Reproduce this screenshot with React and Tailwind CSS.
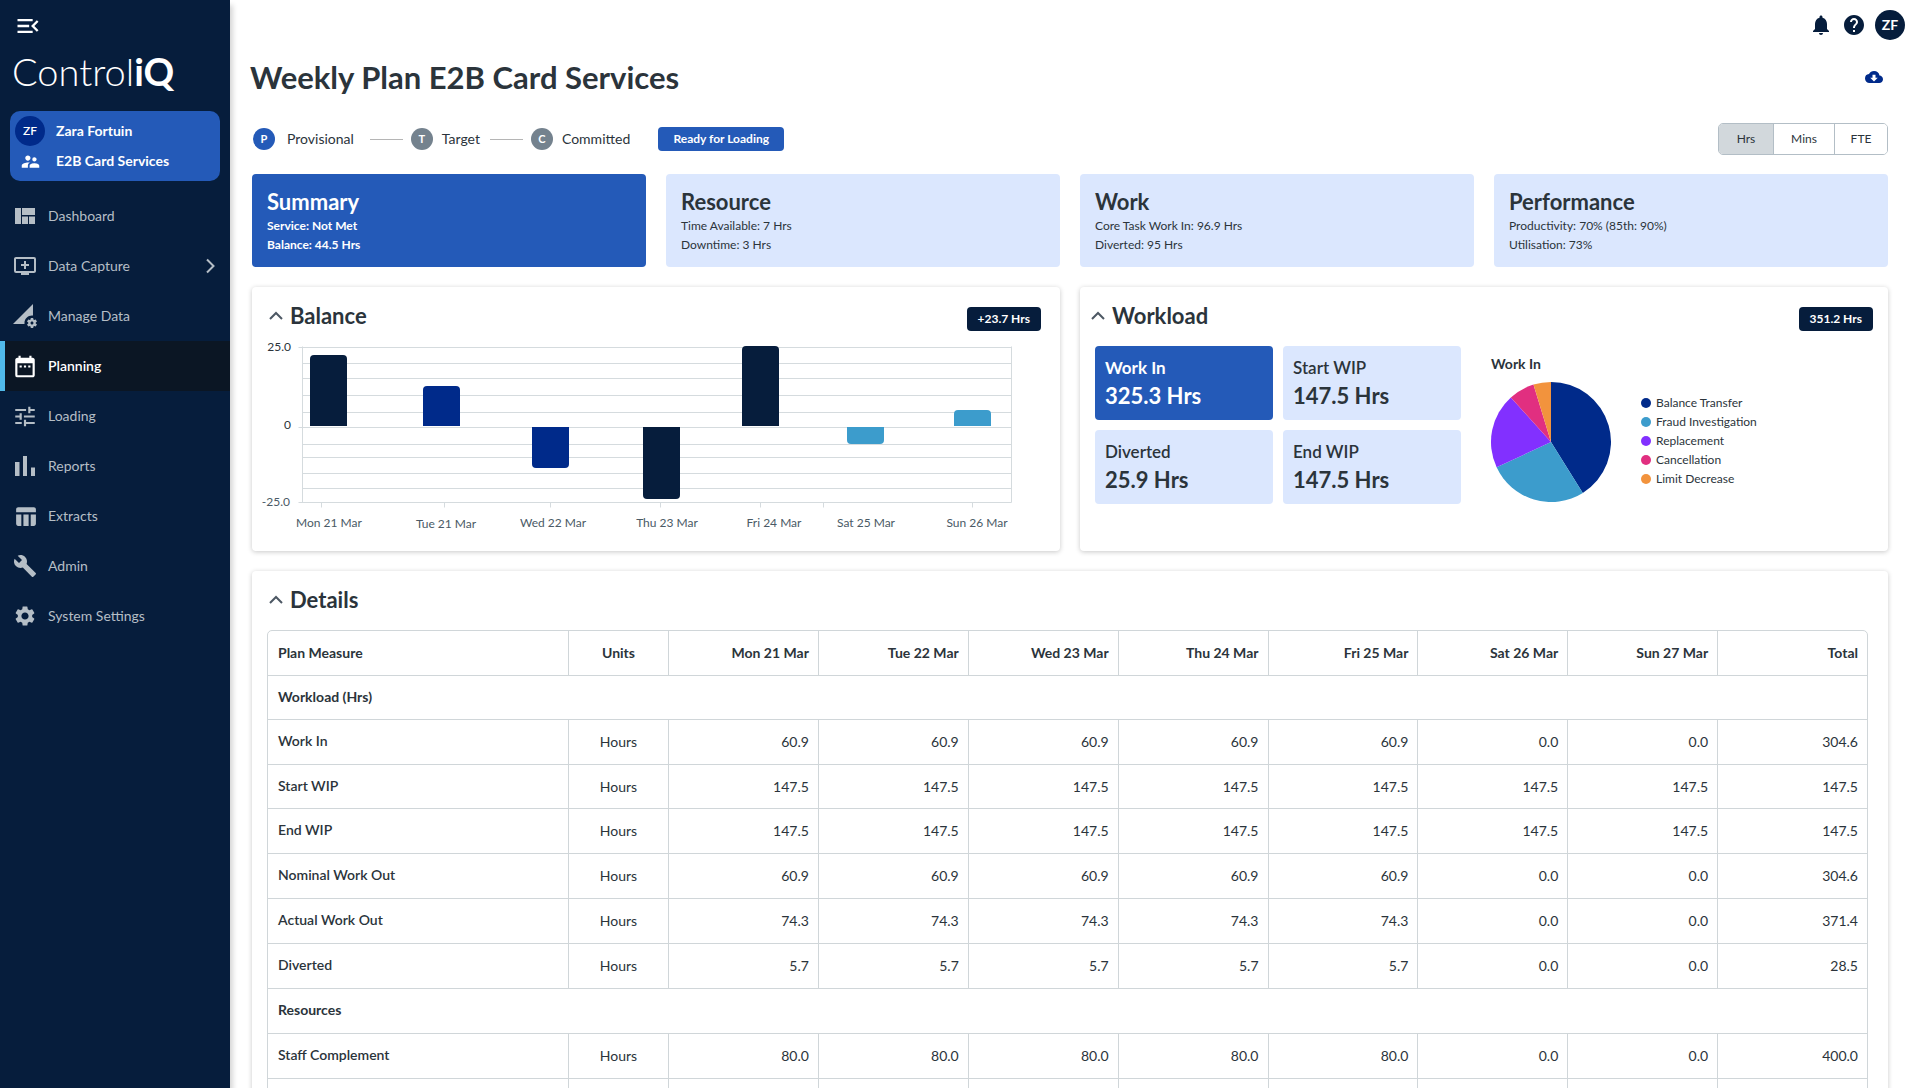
import React, { useState } from "react";
import {
  MdMenuOpen,
  MdAddToQueue,
  MdPermDataSetting,
  MdDateRange,
  MdTune,
  MdTableChart,
  MdBuild,
  MdSettings,
  MdSupervisorAccount,
  MdNotifications,
  MdHelp,
  MdCloudDownload,
} from "react-icons/md";

function QuiltIcon() {
  return (
    <svg width="20" height="16" viewBox="0 0 20 16" fill="currentColor" aria-hidden="true">
      <path d="M0 0h6v16H0zM7 0h13v7H7zM7 8.500h6V16H7zM14 8.500h6V16h-6z" />
    </svg>
  );
}

function BarsIcon() {
  return (
    <svg width="20" height="20" viewBox="0 0 20 20" fill="currentColor" aria-hidden="true">
      <path d="M0 6h4.500v14H0zM8 0h4v20H8zM16 11.500h4V20h-4z" />
    </svg>
  );
}

const NAV = [
  { label: "Dashboard", icon: <QuiltIcon /> },
  { label: "Data Capture", icon: <MdAddToQueue size={24} />, more: true },
  { label: "Manage Data", icon: <MdPermDataSetting size={24} /> },
  { label: "Planning", icon: <MdDateRange size={27} />, active: true },
  { label: "Loading", icon: <MdTune size={27} /> },
  { label: "Reports", icon: <BarsIcon /> },
  { label: "Extracts", icon: <MdTableChart size={25} /> },
  { label: "Admin", icon: <MdBuild size={24} /> },
  { label: "System Settings", icon: <MdSettings size={24} /> },
];

function Sidebar() {
  return (
    <aside className="z-10 flex w-[230px] shrink-0 flex-col bg-[#061d3c] shadow-[3px_5px_5px_rgba(0,0,0,0.16)]">
      <button type="button" aria-label="Collapse menu" className="mt-3 ml-3.5 h-7 w-7 text-white">
        <MdMenuOpen size={28} />
      </button>
      <div className="mt-[7px] ml-3 flex h-12 items-center text-[38px] leading-[48px] text-white">
        <span className="font-light">Control</span>
        <span className="font-bold">iQ</span>
      </div>
      <div className="mx-[10px] mt-4 flex flex-col rounded-[10px] bg-[#245ab8] px-[5px] pt-[5px] pb-[5px] text-sm font-bold text-white">
        <div className="flex h-[30px] items-center gap-[11px]">
          <span className="flex h-[30px] w-[30px] items-center justify-center rounded-full bg-[#002a8a] text-xs font-semibold">
            ZF
          </span>
          <span>Zara Fortuin</span>
        </div>
        <div className="flex h-[30px] items-center gap-[11px]">
          <span className="flex w-[30px] justify-center">
            <MdSupervisorAccount size={21} />
          </span>
          <span>E2B Card Services</span>
        </div>
      </div>
      <nav className="mt-[10px] flex flex-col">
        {NAV.map((n) => (
          <a
            key={n.label}
            href="#"
            className={
              n.active
                ? "flex h-[50px] items-center border-l-[5px] border-[#50b9e9] bg-[#0b1624] pr-[15px] pl-[7px] text-sm font-semibold text-white"
                : "flex h-[50px] items-center pr-[15px] pl-3 text-sm text-[#b5bec6]"
            }
          >
            <span className="mr-[10px] flex w-[26px] justify-center">{n.icon}</span>
            <span className="flex-1">{n.label}</span>
            {n.more && (
              <svg width="9" height="16" viewBox="0 0 9 16" fill="none" stroke="currentColor" strokeWidth="2" aria-hidden="true">
                <path d="M1 1.500L7.500 8L1 14.500" />
              </svg>
            )}
          </a>
        ))}
      </nav>
    </aside>
  );
}

function Step({ letter, label, active }) {
  return (
    <div className={active ? "flex items-center gap-3" : "flex items-center gap-[9px]"}>
      <span
        className={
          active
            ? "flex h-[22px] w-[22px] items-center justify-center rounded-full bg-[#245ab8] text-[11px] font-bold text-white"
            : "flex h-[22px] w-[22px] items-center justify-center rounded-full bg-[#74828e] text-[11px] font-bold text-white"
        }
      >
        {letter}
      </span>
      <span className="text-sm">{label}</span>
    </div>
  );
}

function Toggle() {
  const [unit, setUnit] = useState("Hrs");
  const units = [
    ["Hrs", "w-[54px]"],
    ["Mins", "w-[61px] border-l border-[#b3bec6]"],
    ["FTE", "w-[53px] border-l border-[#b3bec6]"],
  ];
  return (
    <div className="flex h-8 overflow-hidden rounded-[5px] border border-[#b3bec6] text-xs">
      {units.map(([u, w]) => (
        <button
          key={u}
          type="button"
          aria-pressed={u === unit}
          onClick={() => setUnit(u)}
          className={(u === unit ? "bg-[#d2d8dc] " : "bg-white ") + w}
        >
          {u}
        </button>
      ))}
    </div>
  );
}

const CARDS = [
  { title: "Summary", lines: ["Service: Not Met", "Balance: 44.5 Hrs"], active: true },
  { title: "Resource", lines: ["Time Available: 7 Hrs", "Downtime: 3 Hrs"] },
  { title: "Work", lines: ["Core Task Work In: 96.9 Hrs", "Diverted: 95 Hrs"] },
  { title: "Performance", lines: ["Productivity: 70% (85th: 90%)", "Utilisation: 73%"] },
];

function PanelHeading({ title, badge, pad }) {
  return (
    <div className={"flex items-start justify-between " + pad}>
      <button type="button" className="flex items-center gap-[7px]" aria-expanded="true">
        <svg width="14" height="10" viewBox="0 0 14 10" fill="none" stroke="#4d5864" strokeWidth="2" aria-hidden="true">
          <path d="M1 8L7 2L13 8" />
        </svg>
        <h2 className="text-[22px] leading-7 font-bold">{title}</h2>
      </button>
      {badge && (
        <span className="mt-[5px] flex h-6 items-center rounded-[4px] bg-[#061d3c] px-[11px] text-xs font-bold text-white">
          {badge}
        </span>
      )}
    </div>
  );
}

const GRID = [11, 27, 42, 59, 76, 91, 108, 121, 137, 152, 166];
const BARS = [
  { label: "Mon 21 Mar", x: 58, y: 19, h: 71, tick: 69, tx: 77, ty: 191, fill: "#061d3c" },
  { label: "Tue 21 Mar", x: 171, y: 50, h: 40, tick: 192, tx: 194, ty: 192, fill: "#002a8a" },
  { label: "Wed 22 Mar", x: 280, y: 91, h: 41, tick: 298, tx: 301, ty: 191, fill: "#002a8a" },
  { label: "Thu 23 Mar", x: 391, y: 91, h: 72, tick: 408, tx: 415, ty: 191, fill: "#061d3c" },
  { label: "Fri 24 Mar", x: 490, y: 10, h: 80, tick: 508, tx: 522, ty: 191, fill: "#061d3c" },
  { label: "Sat 25 Mar", x: 595, y: 91, h: 17, tick: 571, tx: 614, ty: 191, fill: "#3c9ccc" },
  { label: "Sun 26 Mar", x: 702, y: 74, h: 16, tick: 720, tx: 725, ty: 191, fill: "#3c9ccc" },
];

function barPath({ x, y, h }) {
  const w = 37;
  const r = 4;
  return y < 91
    ? `M${x} ${y + h}V${y + r}q0 -${r} ${r} -${r}h${w - 2 * r}q${r} 0 ${r} ${r}V${y + h}z`
    : `M${x} ${y}V${y + h - r}q0 ${r} ${r} ${r}h${w - 2 * r}q${r} 0 ${r} -${r}V${y}z`;
}

function BalanceChart() {
  return (
    <svg viewBox="0 0 808 200" className="block w-full" role="img" aria-label="Balance per day">
      <g stroke="#d5dbde" strokeWidth="1" transform="translate(0.5 0.5)">
        {GRID.map((y, i) => (
          <path key={y} d={`M${i === 0 || i === 5 || i === 10 ? 46 : 50} ${y}H759`} />
        ))}
        <path d="M50 10V166M759 10V166" />
        {BARS.map((b) => (
          <path key={b.label} d={`M${b.tick} 166V171`} />
        ))}
      </g>
      {BARS.map((b) => (
        <path key={b.label} d={barPath(b)} fill={b.fill} />
      ))}
      <g fontSize="12" textAnchor="end" fill="#2b343b">
        <text x="39" y="15">25.0</text>
        <text x="39" y="93">0</text>
        <text x="38" y="170" fill="#4a5a66">-25.0</text>
      </g>
      <g fontSize="12" textAnchor="middle" fill="#4a5a66">
        {BARS.map((b) => (
          <text key={b.label} x={b.tx} y={b.ty}>
            {b.label}
          </text>
        ))}
      </g>
    </svg>
  );
}

const TILES = [
  { label: "Work In", value: "325.3 Hrs", active: true },
  { label: "Start WIP", value: "147.5 Hrs" },
  { label: "Diverted", value: "25.9 Hrs" },
  { label: "End WIP", value: "147.5 Hrs" },
];

const SLICES = [
  { label: "Balance Transfer", from: 0, to: 148, fill: "#002a8a", dot: "bg-[#002a8a]" },
  { label: "Fraud Investigation", from: 148, to: 245, fill: "#3c9ccc", dot: "bg-[#3c9ccc]" },
  { label: "Replacement", from: 245, to: 318, fill: "#8230ff", dot: "bg-[#8230ff]" },
  { label: "Cancellation", from: 318, to: 343, fill: "#e12f80", dot: "bg-[#e12f80]" },
  { label: "Limit Decrease", from: 343, to: 360, fill: "#f2933d", dot: "bg-[#f2933d]" },
];

function slicePath(from, to) {
  const p = (a) => {
    const t = (a * Math.PI) / 180;
    return `${60 + 60 * Math.sin(t)} ${60 - 60 * Math.cos(t)}`;
  };
  return `M60 60L${p(from)}A60 60 0 0 1 ${p(to)}Z`;
}

const COLUMNS = ["Mon 21 Mar", "Tue 22 Mar", "Wed 23 Mar", "Thu 24 Mar", "Fri 25 Mar", "Sat 26 Mar", "Sun 27 Mar", "Total"];

const ROWS = [
  { group: "Workload (Hrs)", h: "h-11" },
  { label: "Work In", values: ["60.9", "60.9", "60.9", "60.9", "60.9", "0.0", "0.0", "304.6"] },
  { label: "Start WIP", h: "h-11", values: ["147.5", "147.5", "147.5", "147.5", "147.5", "147.5", "147.5", "147.5"] },
  { label: "End WIP", values: ["147.5", "147.5", "147.5", "147.5", "147.5", "147.5", "147.5", "147.5"] },
  { label: "Nominal Work Out", values: ["60.9", "60.9", "60.9", "60.9", "60.9", "0.0", "0.0", "304.6"] },
  { label: "Actual Work Out", values: ["74.3", "74.3", "74.3", "74.3", "74.3", "0.0", "0.0", "371.4"] },
  { label: "Diverted", values: ["5.7", "5.7", "5.7", "5.7", "5.7", "0.0", "0.0", "28.5"] },
  { group: "Resources" },
  { label: "Staff Complement", values: ["80.0", "80.0", "80.0", "80.0", "80.0", "0.0", "0.0", "400.0"] },
  { label: "", values: ["", "", "", "", "", "", "", ""] },
];

function DetailsTable() {
  return (
    <table className="w-full table-fixed border-separate border-spacing-0 rounded-[5px] border border-[#d0d6d9] text-sm">
      <colgroup>
        <col className="w-[300px]" />
        <col className="w-[100px]" />
        {COLUMNS.map((c) => (
          <col key={c} />
        ))}
      </colgroup>
      <thead>
        <tr className="h-[45px]">
          <th scope="col" className="border-b border-[#d0d6d9] px-[10px] text-left font-bold">Plan Measure</th>
          <th scope="col" className="border-b border-l border-[#d0d6d9] text-center font-bold">Units</th>
          {COLUMNS.map((c) => (
            <th key={c} scope="col" className="border-b border-l border-[#d0d6d9] px-[9px] text-right font-bold">
              {c}
            </th>
          ))}
        </tr>
      </thead>
      <tbody>
        {ROWS.map((r, i) => (
          <tr key={i} className={r.h || "h-[45px]"}>
            {r.group ? (
              <th scope="rowgroup" colSpan={10} className="border-b border-[#d0d6d9] px-[10px] pb-[2px] text-left font-bold">
                {r.group}
              </th>
            ) : (
              <>
                <th scope="row" className="border-b border-[#d0d6d9] px-[10px] pb-[2px] text-left font-semibold">
                  {r.label}
                </th>
                <td className="border-b border-l border-[#d0d6d9] text-center">{r.label && "Hours"}</td>
                {r.values.map((v, j) => (
                  <td key={j} className="border-b border-l border-[#d0d6d9] px-[9px] text-right">
                    {v}
                  </td>
                ))}
              </>
            )}
          </tr>
        ))}
      </tbody>
    </table>
  );
}

export default function App() {
  return (
    <div className="flex h-screen overflow-hidden bg-white font-['Lato','Open_Sans',sans-serif] text-[#2b343b]">
      <Sidebar />
      <main className="min-w-0 flex-1 overflow-y-auto [scrollbar-width:none]">
        <header className="flex items-center justify-end gap-[9px] pt-[10px] pr-[15px] text-[#061d3c]">
          <button type="button" aria-label="Notifications">
            <MdNotifications size={24} />
          </button>
          <button type="button" aria-label="Help">
            <MdHelp size={24} />
          </button>
          <button type="button" className="h-[30px] w-[30px] rounded-full bg-[#061d3c] text-sm font-bold text-white">
            ZF
          </button>
        </header>
        <div className="pt-[17px] pr-8 pl-5">
          <div className="flex h-10 items-center justify-between">
            <h1 className="text-[31px] leading-10 font-bold">Weekly Plan E2B Card Services</h1>
            <button type="button" aria-label="Download" className="mr-[5px] text-[#002a8a]">
              <MdCloudDownload size={18} />
            </button>
          </div>
        </div>
        <div className="pr-8 pl-[22px]">
          <div className="mt-[26px] flex h-8 items-center justify-between">
            <div className="flex items-center pl-px">
              <Step letter="P" label="Provisional" active />
              <span className="mr-2 ml-4 h-px w-[33px] bg-[#b5b5b5]" />
              <Step letter="T" label="Target" />
              <span className="mr-2 ml-[10px] h-px w-[33px] bg-[#b5b5b5]" />
              <Step letter="C" label="Committed" />
              <button type="button" className="ml-7 h-6 w-[126px] rounded-[4px] bg-[#245ab8] text-xs font-bold text-white">
                Ready for Loading
              </button>
            </div>
            <Toggle />
          </div>
          <section className="mt-[19px] grid grid-cols-4 gap-5">
            {CARDS.map((c) => (
              <button
                key={c.title}
                type="button"
                className={
                  c.active
                    ? "flex flex-col items-start rounded-[4px] bg-[#245ab8] px-[15px] py-[13px] text-left font-bold text-white"
                    : "flex flex-col items-start rounded-[4px] bg-[#dbe7fe] px-[15px] py-[13px] text-left"
                }
              >
                <span className="text-[22px] leading-[29px] font-bold">{c.title}</span>
                {c.lines.map((l) => (
                  <span key={l} className="text-xs leading-[19px]">
                    {l}
                  </span>
                ))}
              </button>
            ))}
          </section>
          <div className="mt-5 grid grid-cols-2 gap-5">
            <section className="rounded-[4px] bg-white pt-[15px] pb-[15px] shadow-[0_1px_5px_rgba(0,0,0,0.22)]">
              <PanelHeading title="Balance" badge="+23.7 Hrs" pad="h-[34px] pl-[17px] pr-[19px]" />
              <BalanceChart />
            </section>
            <section className="rounded-[4px] bg-white pt-[15px] pb-[15px] shadow-[0_1px_5px_rgba(0,0,0,0.22)]">
              <PanelHeading title="Workload" badge="351.2 Hrs" pad="h-[34px] pl-[11px] pr-[15px]" />
              <div className="mt-[10px] flex items-start pl-[15px]">
                <div className="grid grid-cols-2 gap-[10px]">
                  {TILES.map((t) => (
                    <button
                      key={t.label}
                      type="button"
                      className={
                        t.active
                          ? "flex h-[74px] w-[178px] flex-col justify-center rounded-[4px] bg-[#245ab8] pb-[2px] pl-[10px] text-left font-bold text-white"
                          : "flex h-[74px] w-[178px] flex-col justify-center rounded-[4px] bg-[#dbe7fe] pb-[2px] pl-[10px] text-left font-semibold"
                      }
                    >
                      <span className="text-[17px] leading-7">{t.label}</span>
                      <span className="text-[22px] leading-7 font-bold">{t.value}</span>
                    </button>
                  ))}
                </div>
                <div className="mt-2 ml-[30px]">
                  <h3 className="text-sm leading-5 font-bold">Work In</h3>
                  <svg width="120" height="120" viewBox="0 0 120 120" className="mt-2" role="img" aria-label="Work In by type">
                    {SLICES.map((s) => (
                      <path key={s.label} d={slicePath(s.from, s.to)} fill={s.fill} />
                    ))}
                  </svg>
                </div>
                <ul className="mt-[47px] ml-[30px] text-xs leading-[19px]">
                  {SLICES.map((s) => (
                    <li key={s.label} className="flex items-center gap-[5px]">
                      <span className={"h-[10px] w-[10px] rounded-full " + s.dot} />
                      {s.label}
                    </li>
                  ))}
                </ul>
              </div>
            </section>
          </div>
          <section className="mt-5 rounded-[4px] bg-white px-[15px] pt-[15px] pb-5 shadow-[0_1px_5px_rgba(0,0,0,0.22)]">
            <PanelHeading title="Details" pad="h-[44px] pl-[2px]" />
            <div className="pr-[5px]">
              <DetailsTable />
            </div>
          </section>
        </div>
      </main>
    </div>
  );
}
